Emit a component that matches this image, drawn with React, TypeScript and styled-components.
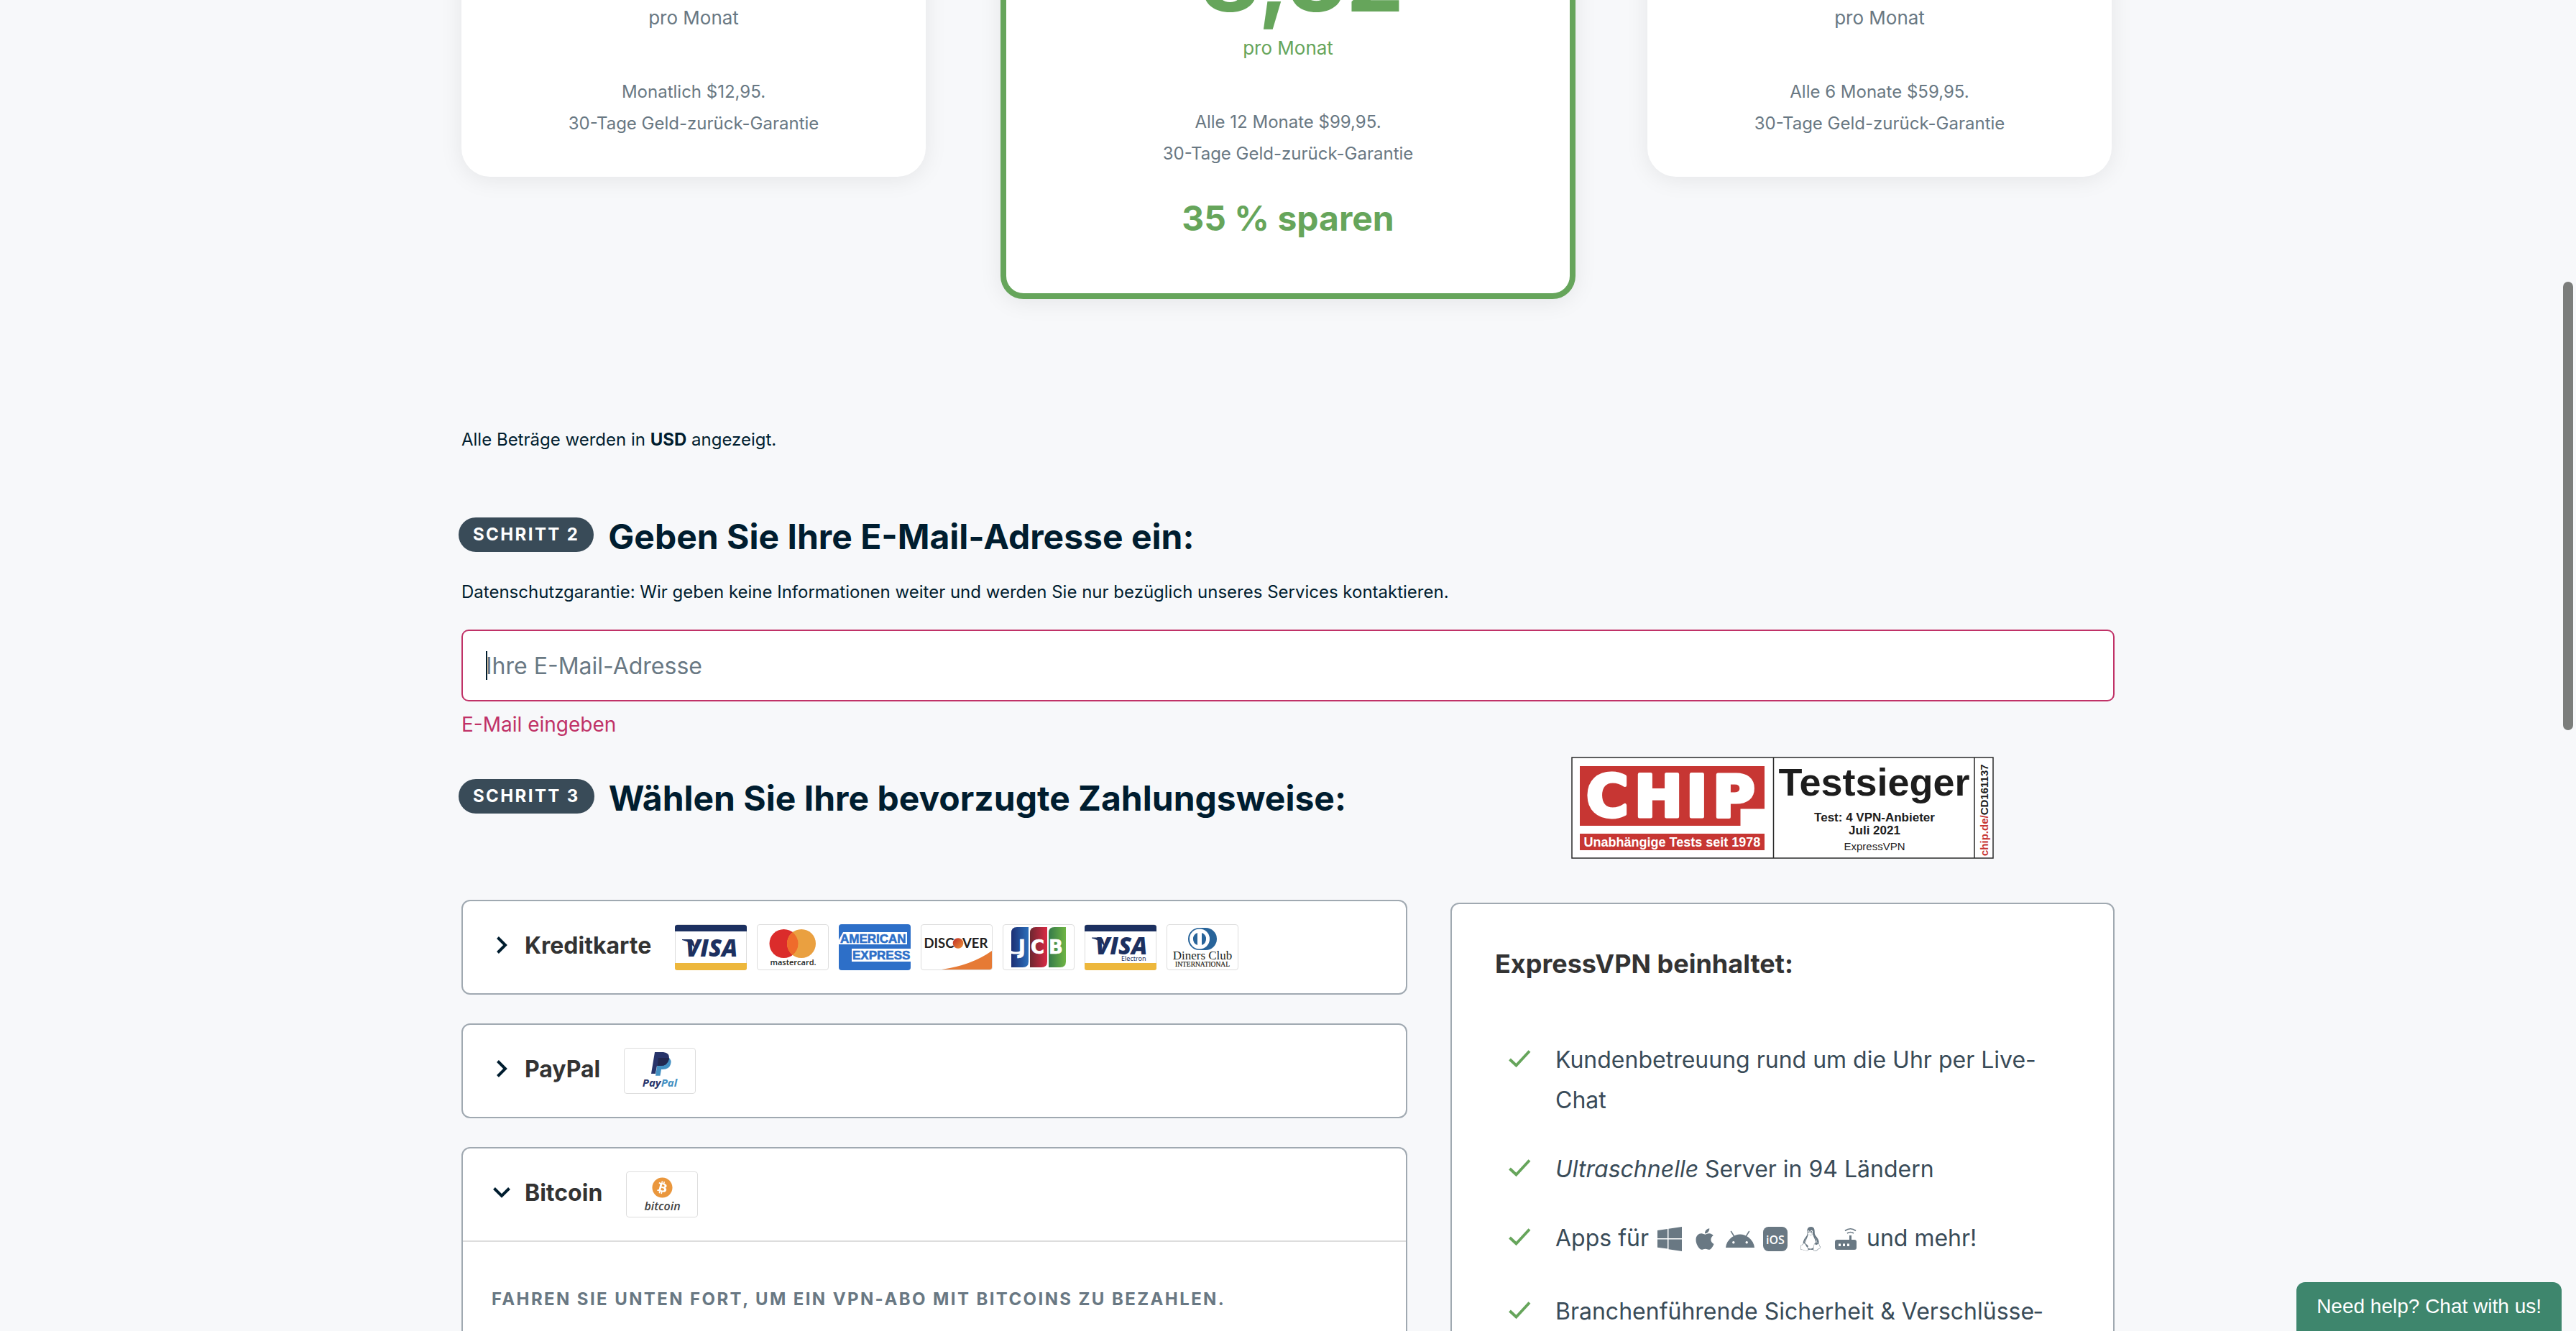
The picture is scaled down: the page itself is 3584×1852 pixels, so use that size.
import React, { useState } from "react";
import styled, { createGlobalStyle } from "styled-components";
import { FaApple, FaBitcoin, FaLinux } from "react-icons/fa";

const color = {
  page: "#f7f8fa",
  ink: "#001d2f",
  slate: "#394b58",
  muted: "#697883",
  green: "#66a55b",
  pink: "#c03267",
  line: "#a0a9b1",
  hairline: "#dddddd",
  title: "#333333",
  navy: "#1c3060",
};

const GlobalStyle = createGlobalStyle`
  *, *::before, *::after { box-sizing: border-box; }
  html, body { margin: 0; height: 100%; overflow: hidden; }
  body {
    background: ${color.page};
    color: ${color.ink};
    font-family: Inter, "Liberation Sans", sans-serif;
    font-size: 24px;
    line-height: 44px;
  }
  h2, h3, p, ul { margin: 0; padding: 0; }
  button, input { font: inherit; color: inherit; }
`;

const Page = styled.div`
  height: 100vh;
  overflow: hidden;
  background: ${color.page};
`;

const Container = styled.main`
  max-width: 2300px;
  margin: 0 auto;
`;

/* Plans */

const Plans = styled.section`
  display: grid;
  grid-template-columns: 646fr 800fr 646fr;
  column-gap: 104px;
  align-items: start;
  margin-top: -200px;
`;

const Plan = styled.article<{ $featured?: boolean }>`
  display: flex;
  flex-direction: column;
  align-items: center;
  text-align: center;
  background: #ffffff;
  color: ${color.muted};
  border: ${(p) => (p.$featured ? `8px solid ${color.green}` : "0")};
  border-radius: ${(p) => (p.$featured ? 32 : 40)}px;
  padding: ${(p) => (p.$featured ? "98px 40px 76px" : "64px 40px 52px")};
  box-shadow: 0 4px 32px rgba(0, 0, 0, 0.08);
  &:last-child {
    margin: 0 4px 0 -4px;
  }
`;

const Price = styled.div<{ $featured?: boolean }>`
  display: flex;
  align-items: flex-start;
  font-size: 128px;
  font-weight: 700;
  line-height: 128px;
  margin-bottom: 11px;
  color: ${(p) => (p.$featured ? color.green : color.ink)};
`;

const Currency = styled.span`
  font-size: 60px;
  line-height: 80px;
`;

const Period = styled.div<{ $featured?: boolean }>`
  font-size: 26px;
  margin-bottom: 59px;
  color: ${(p) => (p.$featured ? color.green : color.muted)};
`;

const Saving = styled.div`
  margin-top: 40px;
  font-size: 48px;
  line-height: 56px;
  font-weight: 700;
  color: ${color.green};
`;

/* Steps */

const CurrencyNote = styled.p`
  margin-top: 174px;
`;

const StepRow = styled.div`
  display: flex;
  align-items: flex-start;
  gap: 20px;
`;

const StepPill = styled.span`
  flex: none;
  height: 48px;
  margin-left: -4px;
  padding: 0 20px;
  border-radius: 24px;
  background: ${color.slate};
  color: #ffffff;
  font-weight: 700;
  line-height: 48px;
  letter-spacing: 0.1em;
  text-transform: uppercase;
`;

const StepTitle = styled.h2`
  font-size: 48px;
  line-height: 54px;
  font-weight: 700;
`;

const EmailStep = styled.section`
  padding-top: 86px;
`;

const Privacy = styled.p`
  margin-top: 28px;
`;

const EmailField = styled.div`
  position: relative;
  margin-top: 30px;
`;

const EmailInput = styled.input`
  display: block;
  width: 100%;
  height: 100px;
  padding: 0 32px;
  border: 2px solid ${color.pink};
  border-radius: 10px;
  background: #ffffff;
  font-size: 32px;
  outline: none;
  caret-color: transparent;
  &::placeholder {
    color: ${color.muted};
    opacity: 1;
  }
`;

const Caret = styled.span`
  position: absolute;
  left: 34px;
  top: 30px;
  width: 2px;
  height: 40px;
  background: ${color.ink};
`;

const FieldError = styled.p`
  margin-top: 12px;
  font-size: 28px;
  line-height: 40px;
  color: ${color.pink};
`;

const Columns = styled.section`
  display: grid;
  grid-template-columns: minmax(0, 1316fr) minmax(0, 924fr);
  column-gap: 60px;
  align-items: start;
  margin-top: 25px;
`;

const PaymentColumn = styled.div`
  padding-top: 31px;
`;

const Methods = styled.div`
  display: flex;
  flex-direction: column;
  gap: 40px;
  margin-top: 114px;
`;

const Method = styled.div`
  border: 2px solid ${color.line};
  border-radius: 12px;
  background: #ffffff;
`;

const MethodHeader = styled.button`
  display: flex;
  align-items: center;
  gap: 33px;
  width: 100%;
  height: 128px;
  padding: 0 40px;
  border: 0;
  background: none;
  text-align: left;
  cursor: pointer;
`;

const MethodLabel = styled.span`
  display: flex;
  align-items: center;
  gap: 18px;
  padding-bottom: 5px;
  font-size: 32px;
  font-weight: 700;
  color: ${color.title};
`;

const Logos = styled.span`
  display: flex;
  gap: 14px;
`;

const MethodBody = styled.div`
  border-top: 2px solid ${color.hairline};
  padding: 58px 40px 120px;
  font-weight: 700;
  letter-spacing: 0.1em;
  text-transform: uppercase;
  color: ${color.muted};
`;

/* Sidebar */

const SideColumn = styled.aside`
  display: flex;
  flex-direction: column;
`;

const BadgeWrap = styled.div`
  display: flex;
  justify-content: center;
  margin-bottom: 61px;
`;

const Panel = styled.div`
  border: 2px solid ${color.line};
  border-radius: 12px;
  background: #ffffff;
  padding: 61px 70px 60px 60px;
`;

const PanelTitle = styled.h3`
  font-size: 36px;
  line-height: 44px;
  font-weight: 700;
  color: ${color.title};
`;

const Features = styled.ul`
  display: flex;
  flex-direction: column;
  gap: 40px;
  margin-top: 84px;
  list-style: none;
`;

const Feature = styled.li<{ $tall?: boolean }>`
  display: flex;
  align-items: flex-start;
  gap: 34px;
  min-height: ${(p) => (p.$tall ? 62 : 56)}px;
  padding-left: 18px;
  font-size: 32px;
  line-height: 56px;
  color: ${color.slate};
`;

const CheckIcon = styled.svg`
  flex: none;
  width: 32px;
  height: 56px;
`;

const Platforms = styled.span`
  display: inline-flex;
  align-items: center;
  gap: 9px;
  height: 40px;
  vertical-align: -7px;
  color: ${color.muted};
  svg {
    flex: none;
    width: 40px;
    height: 34px;
  }
`;

/* Overlays */

const ChatButton = styled.button`
  position: fixed;
  right: 20px;
  bottom: 0;
  height: 68px;
  padding: 0 28px;
  border: 0;
  border-radius: 12px 12px 0 0;
  background: #3e866d;
  color: #ffffff;
  font-family: "Liberation Sans", Arial, sans-serif;
  font-size: 28px;
  line-height: 68px;
  cursor: pointer;
`;

const ScrollThumb = styled.div`
  position: fixed;
  top: 392px;
  right: 4px;
  width: 14px;
  height: 624px;
  border-radius: 7px;
  background: #7b7d7b;
`;

const Chevron = ({ open }: { open: boolean }) => (
  <svg width="28" height="28" viewBox="0 0 28 28" fill="none" stroke={color.ink} strokeWidth="4" aria-hidden="true">
    <path d={open ? "M3.5 7.5 14 18 24.5 7.5" : "M8.5 2.5 19 13 8.5 23.5"} />
  </svg>
);

const Check = () => (
  <CheckIcon viewBox="0 0 32 56" fill="none" stroke={color.green} strokeWidth="4" aria-hidden="true">
    <path d="M2.5 27 11.5 35.5 30 15.5" />
  </CheckIcon>
);

const CardFrame = ({ name, children }: { name: string; children: React.ReactNode }) => (
  <svg width="100" height="64" viewBox="0 0 100 64" role="img" aria-label={name}>
    <rect x="0.5" y="0.5" width="99" height="63" rx="3.5" fill="#fff" stroke={color.hairline} />
    {children}
  </svg>
);

const Visa = ({ electron }: { electron?: boolean }) => (
  <CardFrame name={electron ? "Visa Electron" : "Visa"}>
    <path d="M0 10V4a3 3 0 0 1 3-3h94a3 3 0 0 1 3 3v6z" fill={color.navy} />
    <path d="M0 54h100v7a3 3 0 0 1-3 3H3a3 3 0 0 1-3-3z" fill="#edb73c" />
    <g fill={color.navy} transform={electron ? "translate(0 -2.5)" : undefined}>
      <path d="M10 21h11q4 0 5 4l3 11q-5-11-19-14z" />
      <text x="15" y="44.5" fontFamily="Open Sans" fontWeight="800" fontStyle="italic" fontSize="33">VISA</text>
    </g>
    {electron && (
      <text x="51" y="51" fontFamily="Noto Sans" fontSize="9" fill={color.navy}>Electron</text>
    )}
  </CardFrame>
);

const Mastercard = () => (
  <CardFrame name="Mastercard">
    <circle cx="37.5" cy="27" r="20" fill="#db2c2b" />
    <circle cx="62" cy="27" r="20" fill="#eaa040" />
    <path d="M49.75 11.2a20 20 0 0 1 0 31.6a20 20 0 0 1 0-31.6z" fill="#ef6b2b" />
    <text x="50.5" y="56.5" textAnchor="middle" fontFamily="Open Sans" fontWeight="600" fontSize="11" fill="#231f20">mastercard.</text>
  </CardFrame>
);

const Amex = () => (
  <svg width="100" height="64" viewBox="0 0 100 64" role="img" aria-label="American Express">
    <rect width="100" height="64" rx="4" fill="#2d6fc8" />
    <path d="M6 11h89v17H0V22zM18 34h82v18H18z" fill="#fff" />
    <g fontFamily="Liberation Sans" fontWeight="700" fontSize="17" fill="#2d6fc8" stroke="#2d6fc8" strokeWidth="0.6">
      <text x="2" y="26">AMERICAN</text>
      <text x="19" y="49">EXPRESS</text>
    </g>
  </svg>
);

const Discover = () => (
  <CardFrame name="Discover">
    <defs>
      <linearGradient id="discoverBall" x1="0" y1="0" x2="1" y2="1">
        <stop offset="0.2" stopColor="#c8402a" />
        <stop offset="1" stopColor="#f0953a" />
      </linearGradient>
    </defs>
    <g fontFamily="Lato" fontWeight="700" fontSize="18.5" fill="#231f20">
      <text x="4.5" y="33">DISC</text>
      <text x="58" y="33">VER</text>
    </g>
    <circle cx="52" cy="26.5" r="7.3" fill="url(#discoverBall)" />
    <path d="M29 63Q71 57 99 37v23a3 3 0 0 1-3 3z" fill="#e67a35" />
  </CardFrame>
);

const jcbBars = [
  { x: 12, from: "#1c2f74", to: "#2b6fbb", letter: "J", tx: 22 },
  { x: 38, from: "#6d2730", to: "#d92a44", letter: "C", tx: 39 },
  { x: 64, from: "#357a4a", to: "#6fb544", letter: "B", tx: 64 },
];

const Jcb = () => (
  <CardFrame name="JCB">
    {jcbBars.map((bar) => (
      <g key={bar.letter}>
        <defs>
          <linearGradient id={`jcb${bar.letter}`}>
            <stop offset="0" stopColor={bar.from} />
            <stop offset="1" stopColor={bar.to} />
          </linearGradient>
        </defs>
        <path d={`M${bar.x} 12q0-8 8-8h16v48q0 8-8 8h-16z`} fill={`url(#jcb${bar.letter})`} />
        <text x={bar.tx} y="41" fontFamily="DejaVu Sans" fontWeight="700" fontSize="26" fill="#fff" stroke="#fff" strokeWidth="0.6">{bar.letter}</text>
      </g>
    ))}
    <path d="M12 37q7 3 13 0v4q-6 1-13 0z" fill="#fff" />
  </CardFrame>
);

const Diners = () => (
  <CardFrame name="Diners Club International">
    <path d="M45.5 5h9a15.5 15.5 0 0 1 0 31h-9a15.5 15.5 0 0 1 0-31z" fill="#28649a" />
    <circle cx="46" cy="20.5" r="14" fill="#fff" />
    <path d="M43 12v17a9 9 0 0 1 0-17zM49 12v17a9 9 0 0 0 0-17z" fill="#28649a" />
    <g fontFamily="Liberation Serif" textAnchor="middle" fill="#231f20">
      <text x="50" y="48.5" fontSize="17">Diners Club</text>
      <text x="50" y="58.5" fontSize="9.5" stroke="#231f20" strokeWidth="0.2">INTERNATIONAL</text>
    </g>
  </CardFrame>
);

const Paypal = () => (
  <CardFrame name="PayPal">
    <path d="M62 13q5 4 3 10-2 7-11 7h-2l-1.5 8.7H44L47 20z" fill="#4390c2" />
    <path d="M43 6h12q9 1 8 9-2 10-12 10h-5l-2 11h-6z" fill="#27346a" />
    <path d="M48 14h13q2 0 2 1-2 10-12 10h-4z" fill="#22284f" />
    <text x="50" y="54" textAnchor="middle" fontFamily="Open Sans" fontWeight="700" fontStyle="italic" fontSize="15" fill="#27346a">
      Pay<tspan fill="#4390c2">Pal</tspan>
    </text>
  </CardFrame>
);

const Bitcoin = () => (
  <CardFrame name="Bitcoin">
    <FaBitcoin x="36" y="8" width="29" height="29" size={29} color="#ea973d" />
    <text x="50.5" y="54" textAnchor="middle" fontFamily="Open Sans" fontWeight="600" fontStyle="italic" fontSize="16" fill="#444">bitcoin</text>
  </CardFrame>
);

const ChipBadge = () => (
  <svg width="588" height="142" viewBox="0 0 588 142" role="img" aria-label="CHIP Testsieger" fontFamily="Liberation Sans" fontWeight="700">
    <rect x="1" y="1" width="586" height="140" fill="#fff" stroke="#2a2a2a" strokeWidth="1.5" />
    <path d="M281.5 1v140M561 1v140" stroke="#2a2a2a" strokeWidth="1.5" />
    <path d="M12 13h257v59.5h-33.5V96H12z" fill="#c73633" />
    <g fontFamily="DejaVu Sans" fontSize="80" fill="#fff" stroke="#fff" strokeWidth="5" strokeLinejoin="round">
      <text x="21" y="82.5">C</text>
      <text x="88" y="82.5">H</text>
      <text x="160" y="82.5">I</text>
      <text x="197" y="82.5">P</text>
    </g>
    <rect x="12" y="107" width="257" height="23" fill="#c73633" />
    <text x="140.5" y="125" textAnchor="middle" fontSize="18" fill="#fff">Unabhängige Tests seit 1978</text>
    <g textAnchor="middle" fill="#1d1d1d">
      <text x="421.5" y="53.5" fontSize="54">Testsieger</text>
      <text x="422" y="90" fontSize="17">Test: 4 VPN-Anbieter</text>
      <text x="422" y="108" fontSize="17">Juli 2021</text>
      <text x="422" y="129.5" fontSize="15" fontWeight="400">ExpressVPN</text>
    </g>
    <text transform="translate(580 138) rotate(-90)" fontSize="15" fill="#1d1d1d">
      <tspan fill="#c73633">chip.de/</tspan>CD161137
    </text>
  </svg>
);

const WindowsIcon = () => (
  <svg viewBox="0 0 40 34" fill="currentColor" aria-hidden="true">
    <path d="M3 5l14-2v13H3zM18.5 2.7 37 0v16H18.5zM3 17.5h14v13L3 28.7zM18.5 17.5H37V34l-18.5-2.7z" />
  </svg>
);

const AndroidIcon = () => (
  <svg viewBox="0 0 40 34" fill="currentColor" aria-hidden="true">
    <path d="M7.5 6.5l5 8M32.5 6.5l-5 8" stroke="currentColor" strokeWidth="1.5" strokeLinecap="round" />
    <path d="M0 29Q1 20 8.5 14.5 14 10.5 20 10.5t11.5 4Q39 20 40 29z" />
    <circle cx="10.8" cy="21.8" r="1.7" fill="#fff" />
    <circle cx="29.2" cy="21.8" r="1.7" fill="#fff" />
  </svg>
);

const IosIcon = () => (
  <svg viewBox="0 0 40 34" fill="currentColor" aria-hidden="true">
    <rect x="3" width="34" height="34" rx="7.5" />
    <text x="20" y="23.5" textAnchor="middle" fontFamily="Open Sans" fontWeight="600" fontSize="16" fill="#fff">iOS</text>
  </svg>
);

const RouterIcon = () => (
  <svg viewBox="0 0 40 34" fill="currentColor" aria-hidden="true">
    <path d="M8 18h17v-6h3v6h4a3 3 0 0 1 3 3v8a3 3 0 0 1-3 3H8a3 3 0 0 1-3-3v-8a3 3 0 0 1 3-3z" />
    <path d="M10 23.5h3v3.5h-3zM16 23.5h3v3.5h-3zM22 23.5h3v3.5h-3z" fill="#fff" />
    <path d="M19 5.5q7.5-5.5 15 0M22 9q4.5-3 9 0" fill="none" stroke="currentColor" strokeWidth="1.7" />
  </svg>
);

const plans = [
  { price: "12,95", billing: "Monatlich $12,95." },
  { price: "8,32", billing: "Alle 12 Monate $99,95.", saving: "35 % sparen", featured: true },
  { price: "9,99", billing: "Alle 6 Monate $59,95." },
];

const methods = [
  { label: "Kreditkarte", logos: [Visa, Mastercard, Amex, Discover, Jcb, () => <Visa electron />, Diners] },
  { label: "PayPal", logos: [Paypal] },
  {
    label: "Bitcoin",
    logos: [Bitcoin],
    text: "Fahren Sie unten fort, um ein VPN-Abo mit Bitcoins zu bezahlen.",
  },
];

export default function App() {
  const [openMethod, setOpenMethod] = useState("Bitcoin");

  return (
    <>
      <GlobalStyle />
      <Page>
        <Container>
          <Plans>
            {plans.map((plan) => (
              <Plan key={plan.price} $featured={plan.featured}>
                <Price $featured={plan.featured}>
                  <Currency>$</Currency>
                  {plan.price}
                </Price>
                <Period $featured={plan.featured}>pro Monat</Period>
                <p>{plan.billing}</p>
                <p>30-Tage Geld-zurück-Garantie</p>
                {plan.saving && <Saving>{plan.saving}</Saving>}
              </Plan>
            ))}
          </Plans>

          <CurrencyNote>
            Alle Beträge werden in <b>USD</b> angezeigt.
          </CurrencyNote>

          <EmailStep>
            <StepRow>
              <StepPill>Schritt 2</StepPill>
              <StepTitle>
                <label htmlFor="email">Geben Sie Ihre E-Mail-Adresse ein:</label>
              </StepTitle>
            </StepRow>
            <Privacy>
              Datenschutzgarantie: Wir geben keine Informationen weiter und werden Sie nur bezüglich unseres Services
              kontaktieren.
            </Privacy>
            <EmailField>
              <EmailInput
                id="email"
                type="email"
                placeholder="Ihre E-Mail-Adresse"
                aria-invalid="true"
                aria-describedby="email-error"
              />
              <Caret />
            </EmailField>
            <FieldError id="email-error">E-Mail eingeben</FieldError>
          </EmailStep>

          <Columns>
            <PaymentColumn>
              <StepRow>
                <StepPill>Schritt 3</StepPill>
                <StepTitle>Wählen Sie Ihre bevorzugte Zahlungsweise:</StepTitle>
              </StepRow>
              <Methods>
                {methods.map((method) => {
                  const open = openMethod === method.label;
                  return (
                    <Method key={method.label}>
                      <MethodHeader type="button" aria-expanded={open} onClick={() => setOpenMethod(method.label)}>
                        <MethodLabel>
                          <Chevron open={open} />
                          {method.label}
                        </MethodLabel>
                        <Logos>
                          {method.logos.map((Logo, i) => (
                            <Logo key={i} />
                          ))}
                        </Logos>
                      </MethodHeader>
                      {open && method.text && <MethodBody>{method.text}</MethodBody>}
                    </Method>
                  );
                })}
              </Methods>
            </PaymentColumn>

            <SideColumn>
              <BadgeWrap>
                <ChipBadge />
              </BadgeWrap>
              <Panel>
                <PanelTitle>ExpressVPN beinhaltet:</PanelTitle>
                <Features>
                  <Feature>
                    <Check />
                    <span>Kundenbetreuung rund um die Uhr per Live-Chat</span>
                  </Feature>
                  <Feature>
                    <Check />
                    <span>
                      <i>Ultraschnelle</i> Server in 94 Ländern
                    </span>
                  </Feature>
                  <Feature $tall>
                    <Check />
                    <span>
                      Apps für{" "}
                      <Platforms>
                        <WindowsIcon />
                        <FaApple />
                        <AndroidIcon />
                        <IosIcon />
                        <FaLinux />
                        <RouterIcon />
                      </Platforms>{" "}
                      und mehr!
                    </span>
                  </Feature>
                  <Feature>
                    <Check />
                    <span>Branchenführende Sicherheit &amp; Verschlüsse&shy;lung</span>
                  </Feature>
                </Features>
              </Panel>
            </SideColumn>
          </Columns>
        </Container>
      </Page>
      <ChatButton type="button">Need help? Chat with us!</ChatButton>
      <ScrollThumb />
    </>
  );
}
